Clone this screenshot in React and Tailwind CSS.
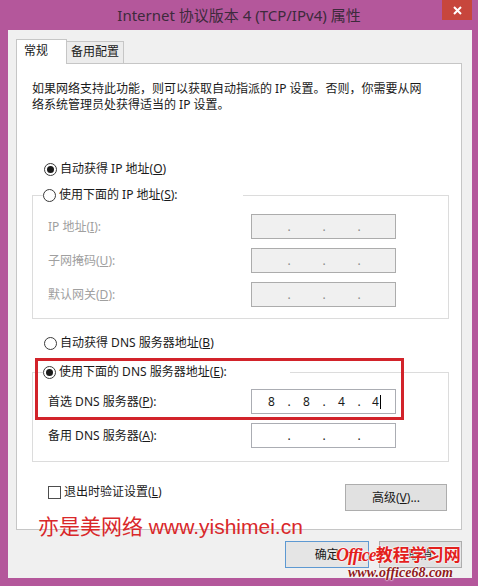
import React from "react";

const Radio = ({ checked }) => (
  <span className="w-[13px] h-[13px] rounded-full border border-[#3a3a3a] bg-white flex items-center justify-center shrink-0">
    {checked && <span className="w-[7px] h-[7px] rounded-full bg-[#1a1a1a]" />}
  </span>
);

// one IPv4 box, four segments split by dots
const IpField = ({ values = ["", "", "", ""], disabled, caret }) => (
  <div
    className={`w-[145px] h-[25px] border flex items-center pl-[4px] text-[12px] ${
      disabled ? "bg-[#f0f0f0] border-[#acacac] text-[#8a8a8a]" : "bg-white border-[#abadb3] text-[#1a1a1a]"
    }`}
  >
    {values.map((v, i) => (
      <React.Fragment key={i}>
        <span className="w-[31px] flex items-center justify-center">
          {v}
          {caret && i === 3 && <span className="inline-block w-px h-[14px] bg-black ml-[1px]" />}
        </span>
        {i < 3 && <span className="w-[4px] text-center">.</span>}
      </React.Fragment>
    ))}
  </div>
);

const Row = ({ label, disabled, children }) => (
  <div className="flex items-center h-[25px]">
    <div className={`w-[218px] pl-[15px] ${disabled ? "text-[#a0a0a0]" : "text-[#1a1a1a]"}`}>{label}</div>
    {children}
  </div>
);

export default function App() {
  return (
    <div className="relative w-[478px] h-[586px] bg-[#b4579b] flex flex-col font-['Segoe_UI','Noto_Sans','Noto_Sans_CJK_SC',sans-serif] text-[12px] leading-[16px] text-[#1a1a1a] overflow-hidden">
      {/* title bar */}
      <div className="h-[30px] flex items-start shrink-0">
        <div className="w-[36px]" />
        <div className="flex-1 text-center text-[15px] leading-[30px] text-[#3d2a3c]">
          Internet 协议版本 4 (TCP/IPv4) 属性
        </div>
        <div className="w-[30px] h-[20px] mr-[6px] bg-[#c7463c] flex items-center justify-center">
          <svg width="9" height="9" viewBox="0 0 9 9">
            <path d="M1 1L8 8M8 1L1 8" stroke="white" strokeWidth="2" />
          </svg>
        </div>
      </div>

      {/* dialog body */}
      <div className="ml-[8px] mr-[6px] h-[548px] bg-[#f0f0f0] pl-[8px] pr-[10px] pt-[9px] flex flex-col">
        {/* tabs */}
        <div className="flex items-end h-[24px]">
          <div className="w-[51px] h-[25px] mb-[-1px] relative z-10 bg-white border border-b-0 border-[#c6c6c6] pl-[7px] pt-[3px]">
            常规
          </div>
          <div className="w-[57px] h-[22px] bg-[#ececec] border border-l-0 border-b-0 border-[#c6c6c6] pl-[4px] pt-[2px]">
            备用配置
          </div>
        </div>

        {/* tab panel */}
        <div className="w-[446px] h-[467px] bg-white border border-[#c6c6c6] flex flex-col">
          <p className="ml-[15px] mt-[17px]">
            如果网络支持此功能，则可以获取自动指派的 IP 设置。否则，你需要从网
            <br />
            络系统管理员处获得适当的 IP 设置。
          </p>

          <div className="mt-[48px] ml-[27px] flex items-center gap-[3px] h-[16px]">
            <Radio checked />
            <span>
              自动获得 IP 地址(<u>O</u>)
            </span>
          </div>

          <fieldset className="mt-[10px] ml-[15px] w-[417px] border border-[#dcdcdc] px-0 pb-[11px]">
            <legend className="ml-[10px] w-[200px] p-0">
              <div className="flex items-center gap-[3px] h-[16px]">
                <Radio />
                <span>
                  使用下面的 IP 地址(<u>S</u>):
                </span>
              </div>
            </legend>
            <div className="mt-[11px] flex flex-col gap-[9px]">
              <Row label={<>IP 地址(<u>I</u>):</>} disabled>
                <IpField disabled />
              </Row>
              <Row label={<>子网掩码(<u>U</u>):</>} disabled>
                <IpField disabled />
              </Row>
              <Row label={<>默认网关(<u>D</u>):</>} disabled>
                <IpField disabled />
              </Row>
            </div>
          </fieldset>

          <div className="mt-[16px] ml-[27px] flex items-center gap-[3px] h-[16px]">
            <Radio />
            <span>
              自动获得 DNS 服务器地址(<u>B</u>)
            </span>
          </div>

          <fieldset className="mt-[13px] ml-[15px] w-[417px] border border-[#dcdcdc] px-0 pb-[13px]">
            <legend className="ml-[10px] w-[247px] p-0">
              <div className="flex items-center gap-[3px] h-[16px]">
                <Radio checked />
                <span>
                  使用下面的 DNS 服务器地址(<u>E</u>):
                </span>
              </div>
            </legend>
            <div className="mt-[9px] flex flex-col gap-[9px]">
              <Row label={<>首选 DNS 服务器(<u>P</u>):</>}>
                <IpField values={["8", "8", "4", "4"]} caret />
              </Row>
              <Row label={<>备用 DNS 服务器(<u>A</u>):</>}>
                <IpField />
              </Row>
            </div>
          </fieldset>

          <div className="mt-[22px] flex items-start justify-between">
            <div className="ml-[31px] flex items-center gap-[3px] h-[16px]">
              <span className="w-[13px] h-[13px] border border-[#4d4d4d] bg-white" />
              <span>
                退出时验证设置(<u>L</u>)
              </span>
            </div>
            <button className="mr-[14px] w-[102px] h-[27px] bg-[#e1e1e1] border border-[#adadad] text-[#1a1a1a]">
              高级(<u>V</u>)...
            </button>
          </div>
        </div>

        {/* dialog buttons */}
        <div className="mt-[11px] ml-[269px] flex gap-[10px]">
          <button className="w-[84px] h-[27px] bg-[#e5e5e5] border border-[#5d99d2] text-[#1a1a1a]">确定</button>
          <button className="w-[84px] h-[27px] bg-[#e1e1e1] border border-[#adadad] text-[#1a1a1a]">取消</button>
        </div>
      </div>

      {/* red highlight box drawn over the screenshot */}
      <div className="absolute left-[35px] top-[358px] w-[369px] h-[62px] border-[3px] border-[#d2232a]" />

      {/* watermarks */}
      <div className="absolute left-[38px] top-[514px] text-[21px] leading-[26px] text-[#d9282a] font-['Liberation_Sans','Noto_Sans_CJK_SC',sans-serif] whitespace-nowrap">
        亦是美网络 www.yishimei.cn
      </div>
      <div className="absolute left-[336px] top-[544px] flex flex-col items-start whitespace-nowrap [text-shadow:0_0_2px_#fff,0_0_2px_#fff,0_0_1px_#fff]">
        <div className="flex items-baseline leading-[20px]">
          <span className="italic font-bold text-[18px] tracking-[-1px] text-[#e3201c] font-['Liberation_Serif',serif]">Office</span>
          <span className="font-bold text-[17px] text-[#e3201c] font-['Noto_Sans_CJK_SC',sans-serif]">教程学习网</span>
        </div>
        <div className="ml-[12px] italic font-bold text-[14px] leading-[16px] text-[#8f1b1b] font-['Liberation_Serif',serif]">
          www.office68.com
        </div>
      </div>
    </div>
  );
}
